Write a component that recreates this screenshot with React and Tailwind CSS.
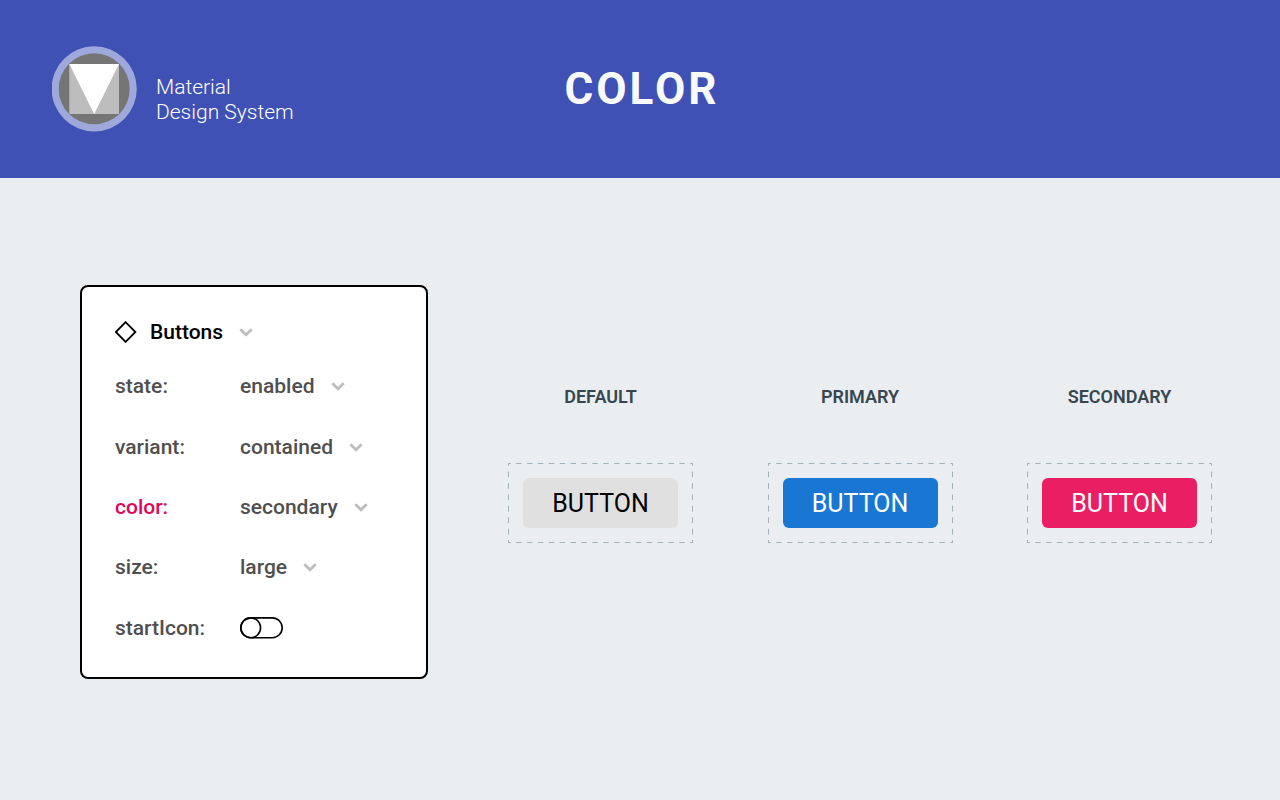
import React, { useState } from "react";

const FIELDS = [
  { name: "state", value: "enabled", options: ["enabled", "hovered", "focused", "disabled"] },
  { name: "variant", value: "contained", options: ["contained", "outlined", "text"] },
  { name: "color", value: "secondary", options: ["default", "primary", "secondary"], active: true },
  { name: "size", value: "large", options: ["small", "medium", "large"] },
];

const SAMPLES = [
  { title: "DEFAULT", button: "bg-[#e0e0e0] text-black" },
  { title: "PRIMARY", button: "bg-[#1976d2] text-white" },
  { title: "SECONDARY", button: "bg-[#e91e63] text-white" },
];

function Logo() {
  return (
    <svg className="size-[86px] shrink-0" viewBox="0 0 86 86" aria-hidden="true">
      <circle cx="42.2" cy="42.8" r="42.6" fill="#9fa8da" />
      <circle cx="42.2" cy="42.8" r="35.5" fill="#757575" />
      <rect x="17.3" y="18" width="49.7" height="50" fill="#bdbdbd" />
      <path d="M17.3 18H67L42.2 68Z" fill="#fff" />
    </svg>
  );
}

function Chevron() {
  return (
    <svg
      className="pointer-events-none absolute right-0 top-1/2 h-2.5 w-3.5 -translate-y-1/2"
      viewBox="0 0 14 10"
      fill="none"
      stroke="#bdbdbd"
      strokeWidth="2.8"
      aria-hidden="true"
    >
      <path d="M1.3 2.3L7 7.8L12.7 2.3" />
    </svg>
  );
}

function Dropdown({ id, label, value, options, className }) {
  return (
    <div className="relative flex w-fit">
      <select
        id={id}
        aria-label={label}
        defaultValue={value}
        className={`field-sizing-content cursor-pointer appearance-none bg-transparent pr-[30px] font-medium ${className}`}
      >
        {options.map((option) => (
          <option key={option}>{option}</option>
        ))}
      </select>
      <Chevron />
    </div>
  );
}

function Toggle({ id }) {
  const [on, setOn] = useState(false);
  return (
    <div className="relative flex h-[22px] w-11">
      <input
        id={id}
        type="checkbox"
        role="switch"
        checked={on}
        onChange={() => setOn(!on)}
        className="h-full w-full cursor-pointer appearance-none"
      />
      <svg
        className="pointer-events-none absolute inset-0 h-full w-full"
        viewBox="0 0 44 22"
        fill="none"
        stroke="#000"
        strokeWidth="1.6"
        aria-hidden="true"
      >
        <rect x="0.8" y="0.9" width="41.4" height="19.8" rx="9.9" />
        <circle cx={on ? 32.3 : 10.7} cy="10.8" r="9.9" />
      </svg>
    </div>
  );
}

function PropertiesCard() {
  return (
    <section className="w-[348px] shrink-0 rounded-lg border-2 border-black bg-white px-[33px] pb-[19px] pt-[31px] text-[21px] leading-7">
      <div className="flex items-center gap-[13px]">
        <svg className="size-[22px]" viewBox="0 0 22 22" fill="none" stroke="#000" strokeWidth="1.8" aria-hidden="true">
          <path d="M10.6 1.1L20.4 11L10.6 20.9L0.8 11Z" />
        </svg>
        <Dropdown label="Component" value="Buttons" options={["Buttons"]} className="text-black" />
      </div>
      <div className="mt-[10px] grid min-h-[302px] auto-rows-fr">
        {FIELDS.map((field) => (
          <div key={field.name} className="flex items-center">
            <label
              htmlFor={field.name}
              className={`w-[125px] font-medium ${field.active ? "text-[#e0055a]" : "text-[#4f4f4f]"}`}
            >
              {field.name}:
            </label>
            <Dropdown id={field.name} value={field.value} options={field.options} className="text-[#4f4f4f]" />
          </div>
        ))}
        <div className="flex items-center">
          <label htmlFor="startIcon" className="w-[125px] font-medium text-[#4f4f4f]">
            startIcon:
          </label>
          <Toggle id="startIcon" />
        </div>
      </div>
    </section>
  );
}

function DashedFrame() {
  const across = { pathLength: 170, strokeDasharray: "5 5", strokeDashoffset: 2.5 };
  const down = { pathLength: 70, strokeDasharray: "5 5", strokeDashoffset: 2.5 };
  return (
    <svg
      className="pointer-events-none absolute inset-0 h-full w-full"
      viewBox="0 0 185 80"
      preserveAspectRatio="none"
      fill="none"
      stroke="#a3b1b8"
      aria-hidden="true"
    >
      <path d="M0 0.5H185" {...across} />
      <path d="M0 79.5H185" {...across} />
      <path d="M0.5 0V80" {...down} />
      <path d="M184.5 0V80" {...down} />
    </svg>
  );
}

function Sample({ title, button }) {
  return (
    <section className="flex flex-col items-center gap-[54px]">
      <h2 className="text-lg leading-6 font-semibold text-[#37474f]">{title}</h2>
      <div className="relative p-[15px]">
        <DashedFrame />
        <button
          type="button"
          className={`h-[50px] w-[155px] cursor-pointer rounded-md pt-0.5 text-[25px] leading-8 ${button}`}
        >
          BUTTON
        </button>
      </div>
    </section>
  );
}

export default function App() {
  return (
    <div className="min-h-screen bg-[#eaeef1] font-[Roboto,sans-serif]">
      <header className="grid grid-cols-[1fr_auto_1fr] items-center bg-[#3f51b5] px-[52px] py-[46px] text-white">
        <div className="flex items-center gap-[18px]">
          <Logo />
          <p className="pt-[22px] text-[21px] leading-[25px] font-light">
            Material
            <br />
            Design System
          </p>
        </div>
        <h1 className="pl-1 text-[44px] leading-[52px] font-bold tracking-[3px] text-[#fafafa]">COLOR</h1>
      </header>
      <main className="flex items-start gap-20 pb-20 pl-20 pr-[68px] pt-[107px]">
        <PropertiesCard />
        <div className="flex flex-1 justify-between pt-[100px]">
          {SAMPLES.map((sample) => (
            <Sample key={sample.title} {...sample} />
          ))}
        </div>
      </main>
    </div>
  );
}
